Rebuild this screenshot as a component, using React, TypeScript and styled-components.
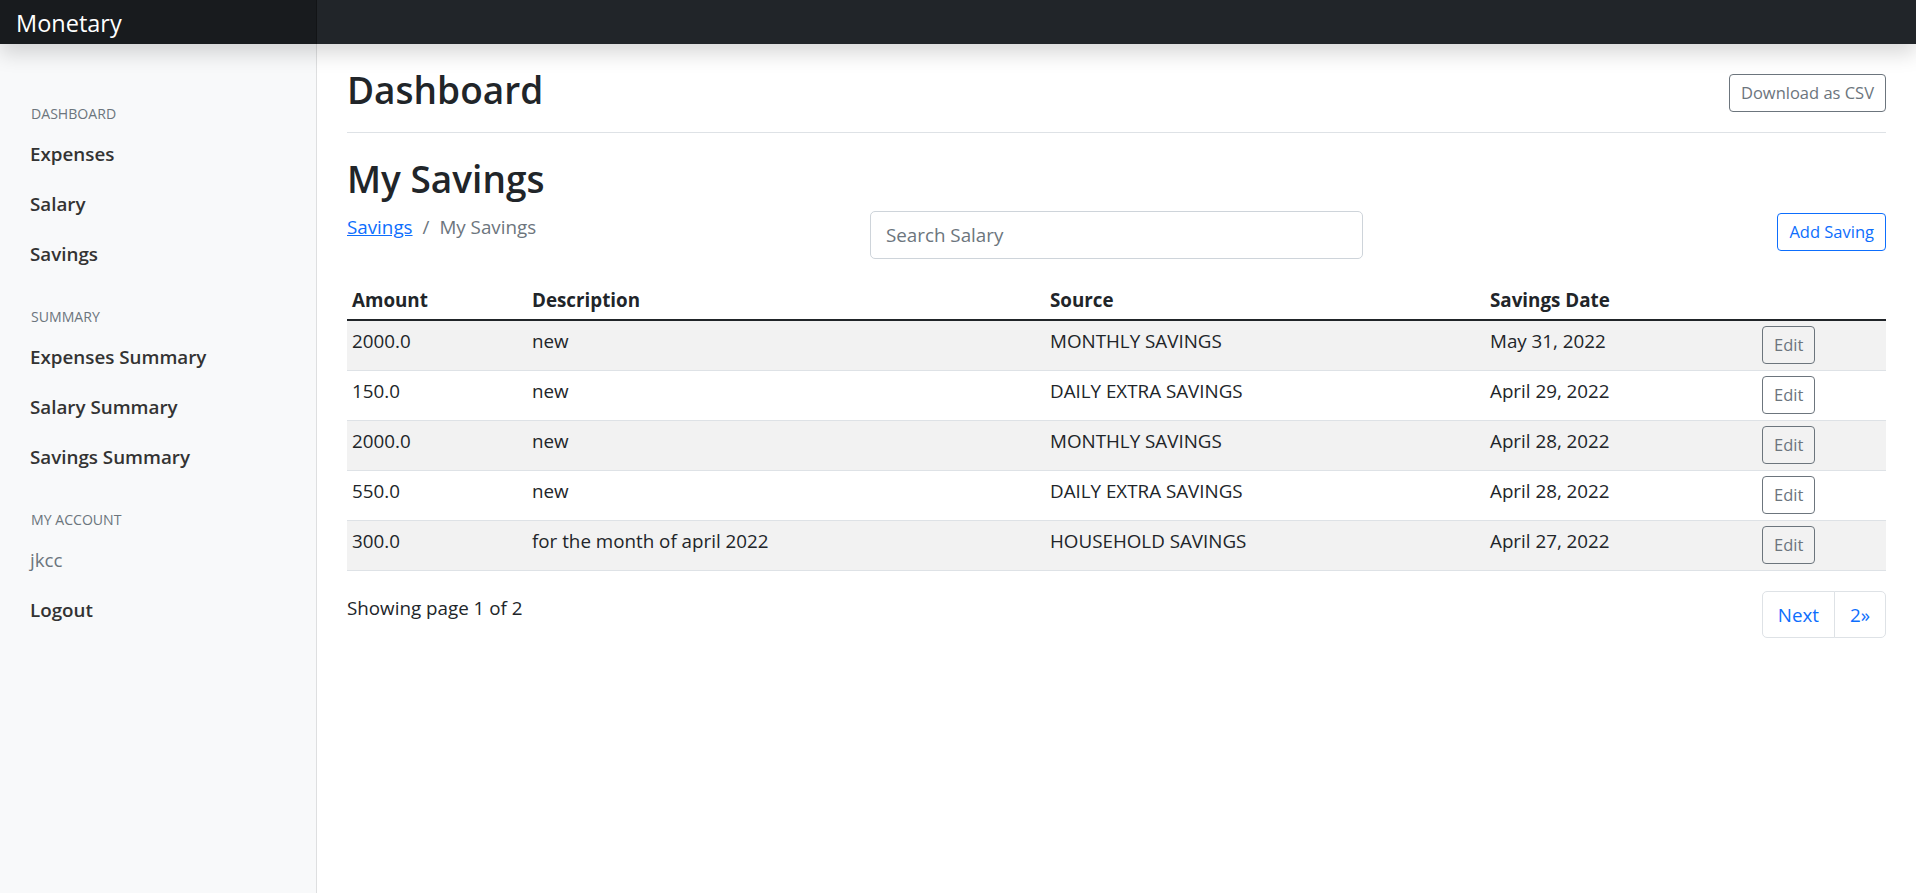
import React from "react";
import styled, { createGlobalStyle } from "styled-components";

const GlobalStyle = createGlobalStyle`
  *, *::before, *::after { box-sizing: border-box; }
  html, body { margin: 0; padding: 0; }
  body {
    font-family: "Open Sans", "Noto Sans", "Liberation Sans", sans-serif;
    font-size: 18.8px;
    line-height: 30px;
    color: #212529;
    background: #fff;
  }
`;

const Navbar = styled.header`
  position: relative;
  z-index: 10;
  display: flex;
  height: 44px;
  background: #212529;
  box-shadow: 0 10px 20px rgba(0, 0, 0, 0.15);
`;

const Brand = styled.a`
  width: 317px;
  display: flex;
  align-items: center;
  padding: 1px 16px 0;
  background: rgba(0, 0, 0, 0.25);
  box-shadow: inset -1px 0 0 rgba(0, 0, 0, 0.25);
  color: #fff;
  font-size: 23.5px;
  text-decoration: none;
`;

const Layout = styled.div`
  display: grid;
  grid-template-columns: 317px 1fr;
  min-height: calc(100vh - 44px);
`;

const Sidebar = styled.nav`
  background: #f8f9fa;
  box-shadow: inset -1px 0 0 rgba(0, 0, 0, 0.1);
  padding-top: 59px;
`;

const SidebarHeading = styled.h6<{ $first?: boolean }>`
  margin: ${(p) => (p.$first ? 0 : 27)}px 0 4px;
  padding: 0 20px 0 31px;
  font-size: 14.1px;
  line-height: 22px;
  font-weight: 400;
  text-transform: uppercase;
  color: #6c757d;
`;

const NavList = styled.ul`
  list-style: none;
  margin: 0;
  padding: 0;
`;

const NavLink = styled.a<{ $muted?: boolean }>`
  display: block;
  padding: 10px 20px 10px 30px;
  font-size: 18.8px;
  line-height: 30px;
  font-weight: ${(p) => (p.$muted ? 500 : 600)};
  color: ${(p) => (p.$muted ? "#6c757d" : "#333")};
  text-decoration: none;
`;

const Main = styled.main`
  padding: 0 30px;
  min-width: 0;
`;

const PageHeader = styled.div`
  display: flex;
  justify-content: space-between;
  align-items: center;
  padding: 20px 0 10px;
  margin-bottom: 20px;
  border-bottom: 1px solid #dee2e6;
`;

const Title = styled.h2`
  margin: 0 0 10px;
  padding-top: 3px;
  font-size: 37px;
  line-height: 45px;
  font-weight: 600;
  color: #212529;
`;

const OutlineButton = styled.button<{ $tone: "secondary" | "primary" }>`
  font-family: inherit;
  font-size: 16.5px;
  line-height: 26px;
  padding: 5px 11px;
  border: 1px solid ${(p) => (p.$tone === "primary" ? "#0d6efd" : "#6c757d")};
  color: ${(p) => (p.$tone === "primary" ? "#0d6efd" : "#6c757d")};
  background: transparent;
  border-radius: 4px;
  cursor: pointer;
  white-space: nowrap;
`;

const Toolbar = styled.div`
  display: grid;
  grid-template-columns: repeat(3, 1fr);
  column-gap: 30px;
  align-items: start;
  margin-bottom: 21px;
`;

const Breadcrumb = styled.ol`
  display: flex;
  list-style: none;
  margin: 0;
  padding: 1px 0 0;
  color: #6c757d;
`;

const Crumb = styled.li`
  & + &::before {
    content: "/";
    padding: 0 10px;
    color: #6c757d;
  }
`;

const CrumbLink = styled.a`
  color: #0d6efd;
  text-decoration: underline;
`;

const SearchInput = styled.input`
  width: 100%;
  height: 48px;
  padding: 0 15px;
  border: 1px solid #ced4da;
  border-radius: 5px;
  font-family: inherit;
  font-size: 18.8px;
  color: #212529;
  &::placeholder { color: #6c757d; }
`;

const AddWrap = styled.div`
  justify-self: end;
  padding-top: 2px;
`;

const Table = styled.table`
  width: 100%;
  border-collapse: collapse;
  table-layout: fixed;
  margin-bottom: 20px;
`;

const Th = styled.th`
  text-align: left;
  padding: 5px 5px 4px;
  font-weight: 700;
  line-height: 30px;
  border-bottom: 2px solid #212529;
`;

const Tr = styled.tr<{ $striped: boolean }>`
  background: ${(p) => (p.$striped ? "#f2f2f2" : "transparent")};
`;

const Td = styled.td`
  padding: 5px 5px 6px;
  vertical-align: top;
  line-height: 30px;
  border-bottom: 1px solid #dee2e6;
`;

const Footer = styled.div`
  display: flex;
  justify-content: space-between;
  align-items: flex-start;
`;

const PageInfo = styled.span`
  padding-top: 2px;
`;

const Pagination = styled.ul`
  display: flex;
  list-style: none;
  margin: 0;
  padding: 0;
`;

const PageLink = styled.a`
  display: block;
  padding: 7.5px 15px;
  line-height: 30px;
  color: #0d6efd;
  text-decoration: none;
  border: 1px solid #dee2e6;
  background: #fff;
  li:first-child > & { border-radius: 5px 0 0 5px; }
  li:last-child > & { border-radius: 0 5px 5px 0; }
  li + li > & { margin-left: -1px; }
`;

const rows = [
  { amount: "2000.0", desc: "new", source: "MONTHLY SAVINGS", date: "May 31, 2022" },
  { amount: "150.0", desc: "new", source: "DAILY EXTRA SAVINGS", date: "April 29, 2022" },
  { amount: "2000.0", desc: "new", source: "MONTHLY SAVINGS", date: "April 28, 2022" },
  { amount: "550.0", desc: "new", source: "DAILY EXTRA SAVINGS", date: "April 28, 2022" },
  { amount: "300.0", desc: "for the month of april 2022", source: "HOUSEHOLD SAVINGS", date: "April 27, 2022" },
];

export default function App() {
  return (
    <>
      <GlobalStyle />
      <Navbar>
        <Brand href="#">Monetary</Brand>
      </Navbar>
      <Layout>
        <Sidebar>
          <SidebarHeading $first>Dashboard</SidebarHeading>
          <NavList>
            <li><NavLink href="#">Expenses</NavLink></li>
            <li><NavLink href="#">Salary</NavLink></li>
            <li><NavLink href="#">Savings</NavLink></li>
          </NavList>
          <SidebarHeading>Summary</SidebarHeading>
          <NavList>
            <li><NavLink href="#">Expenses Summary</NavLink></li>
            <li><NavLink href="#">Salary Summary</NavLink></li>
            <li><NavLink href="#">Savings Summary</NavLink></li>
          </NavList>
          <SidebarHeading>My Account</SidebarHeading>
          <NavList>
            <li><NavLink href="#" $muted>jkcc</NavLink></li>
            <li><NavLink href="#">Logout</NavLink></li>
          </NavList>
        </Sidebar>
        <Main>
          <PageHeader>
            <Title>Dashboard</Title>
            <OutlineButton $tone="secondary">Download as CSV</OutlineButton>
          </PageHeader>
          <Title>My Savings</Title>
          <Toolbar>
            <Breadcrumb>
              <Crumb><CrumbLink href="#">Savings</CrumbLink></Crumb>
              <Crumb>My Savings</Crumb>
            </Breadcrumb>
            <SearchInput placeholder="Search Salary" />
            <AddWrap>
              <OutlineButton $tone="primary">Add Saving</OutlineButton>
            </AddWrap>
          </Toolbar>
          <Table>
            <colgroup>
              <col style={{ width: 180 }} />
              <col style={{ width: 518 }} />
              <col style={{ width: 440 }} />
              <col style={{ width: 272 }} />
              <col />
            </colgroup>
            <thead>
              <tr>
                <Th>Amount</Th>
                <Th>Description</Th>
                <Th>Source</Th>
                <Th>Savings Date</Th>
                <Th></Th>
              </tr>
            </thead>
            <tbody>
              {rows.map((r, i) => (
                <Tr key={i} $striped={i % 2 === 0}>
                  <Td>{r.amount}</Td>
                  <Td>{r.desc}</Td>
                  <Td>{r.source}</Td>
                  <Td>{r.date}</Td>
                  <Td>
                    <OutlineButton $tone="secondary">Edit</OutlineButton>
                  </Td>
                </Tr>
              ))}
            </tbody>
          </Table>
          <Footer>
            <PageInfo>Showing page 1 of 2</PageInfo>
            <Pagination>
              <li><PageLink href="#">Next</PageLink></li>
              <li><PageLink href="#">2»</PageLink></li>
            </Pagination>
          </Footer>
        </Main>
      </Layout>
    </>
  );
}
